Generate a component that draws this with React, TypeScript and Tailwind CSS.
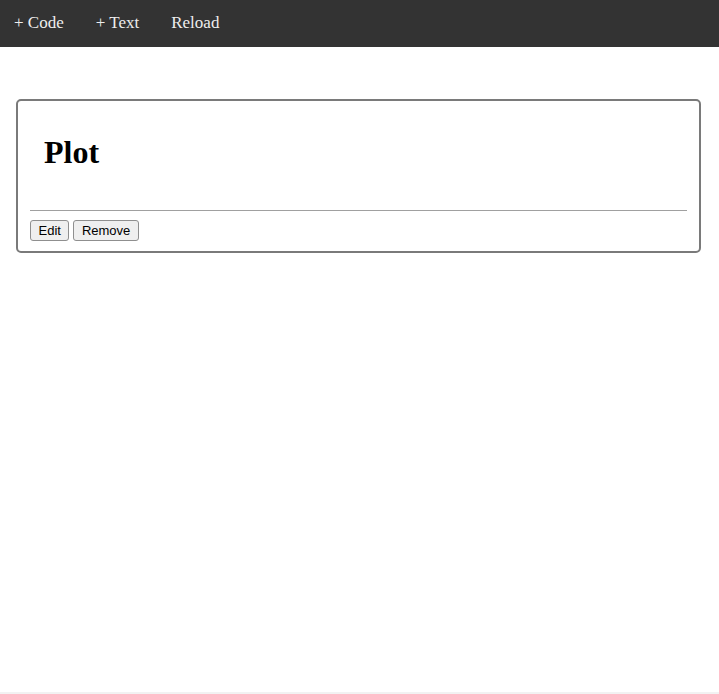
export default function App() {
  return (
    <div className="min-h-screen flex flex-col bg-white font-['Liberation_Serif',serif]">
      <nav className="h-[47px] bg-[#333333] flex items-center gap-8 pl-[14px] pb-[2px] text-[17px] text-[#eeeeee]">
        <a href="#">+ Code</a>
        <a href="#">+ Text</a>
        <a href="#">Reload</a>
      </nav>

      <main className="flex-1 pt-[52px] pl-4 pr-[18px]">
        <div className="border-2 border-[#7a7a7a] rounded-[5px] px-3 pb-[10px]">
          <h1 className="pl-[14px] pt-[33px] pb-[39px] text-[32px] leading-[37px] font-bold text-black">Plot</h1>
          <hr className="border-t border-[#a0a0a0]" />
          <div className="flex gap-1 mt-[9px] font-['Liberation_Sans',sans-serif] text-[13px]">
            <button className="h-[21px] px-[7.5px] border border-[#8f8f8f] rounded-[3px] bg-[#efefef] text-black">Edit</button>
            <button className="h-[21px] px-[7.5px] border border-[#8f8f8f] rounded-[3px] bg-[#efefef] text-black">Remove</button>
          </div>
        </div>
      </main>

      <div className="h-[2px] bg-[#f2f2f2]" />
    </div>
  );
}
